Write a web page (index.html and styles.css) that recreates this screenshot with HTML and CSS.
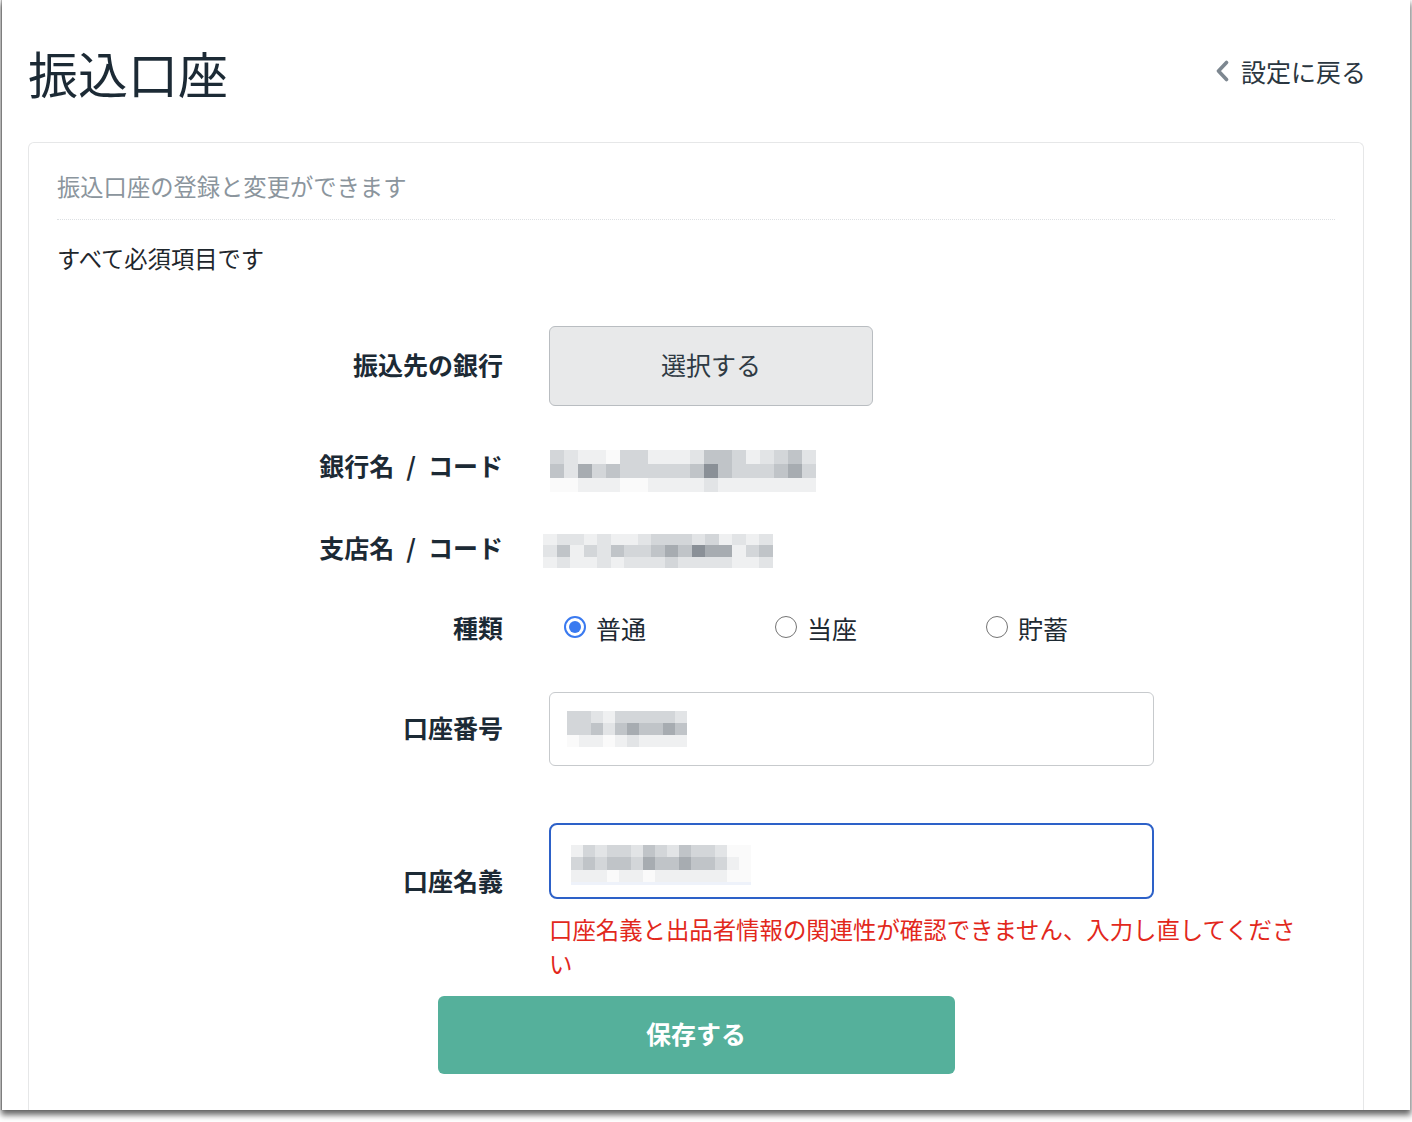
FILE: index.html
```html
<!DOCTYPE html>
<html lang="ja">
<head>
<meta charset="utf-8">
<title>振込口座</title>
<link rel="stylesheet" href="styles.css">
</head>
<body>
<div class="window">
  <header class="header">
    <h1 class="title">振込口座</h1>
    <a class="back" href="#">
      <svg class="chev" width="14" height="22" viewBox="0 0 14 22"><path d="M11.5 2.5 L3.5 11 L11.5 19.5" fill="none" stroke="#7d8790" stroke-width="3.6" stroke-linecap="round" stroke-linejoin="round"/></svg>
      <span>設定に戻る</span>
    </a>
  </header>
  <section class="card">
    <p class="lead">振込口座の登録と変更ができます</p>
    <p class="note">すべて必須項目です</p>
    <div class="form">
      <div class="row row-select">
        <div class="label">振込先の銀行</div>
        <button class="select-btn" type="button">選択する</button>
      </div>
      <div class="row row-bank">
        <div class="label">銀行名<span class="sep">/</span>コード</div>
        <div class="pix pix-bank">
          <i class="s3"></i><i class="s2"></i><i class="s1"></i><i class="s1"></i><i class="s0"></i><i class="s3"></i><i class="s3"></i><i class="s1"></i><i class="s1"></i><i class="s1"></i><i class="s2"></i><i class="s4"></i><i class="s4"></i><i class="s3"></i><i class="s1"></i><i class="s2"></i><i class="s3"></i><i class="s4"></i><i class="s2"></i>
          <i class="s4"></i><i class="s2"></i><i class="s5"></i><i class="s3"></i><i class="s4"></i><i class="s3"></i><i class="s3"></i><i class="s3"></i><i class="s3"></i><i class="s3"></i><i class="s4"></i><i class="s6"></i><i class="s4"></i><i class="s3"></i><i class="s3"></i><i class="s3"></i><i class="s4"></i><i class="s5"></i><i class="s3"></i>
          <i class="s0"></i><i class="s0"></i><i class="s1"></i><i class="s1"></i><i class="s1"></i><i class="s0"></i><i class="s0"></i><i class="s1"></i><i class="s1"></i><i class="s1"></i><i class="s1"></i><i class="s2"></i><i class="s1"></i><i class="s1"></i><i class="s1"></i><i class="s1"></i><i class="s1"></i><i class="s1"></i><i class="s1"></i>
        </div>
      </div>
      <div class="row row-branch">
        <div class="label">支店名<span class="sep">/</span>コード</div>
        <div class="pix pix-branch">
          <i class="s1"></i><i class="s2"></i><i class="s2"></i><i class="s1"></i><i class="s2"></i><i class="s1"></i><i class="s1"></i><i class="s2"></i><i class="s3"></i><i class="s3"></i><i class="s3"></i><i class="s2"></i><i class="s3"></i><i class="s1"></i><i class="s2"></i><i class="s1"></i><i class="s2"></i>
          <i class="s2"></i><i class="s4"></i><i class="s1"></i><i class="s3"></i><i class="s2"></i><i class="s4"></i><i class="s3"></i><i class="s3"></i><i class="s4"></i><i class="s5"></i><i class="s4"></i><i class="s6"></i><i class="s5"></i><i class="s5"></i><i class="s1"></i><i class="s3"></i><i class="s4"></i>
          <i class="s1"></i><i class="s2"></i><i class="s1"></i><i class="s1"></i><i class="s2"></i><i class="s1"></i><i class="s2"></i><i class="s2"></i><i class="s2"></i><i class="s3"></i><i class="s2"></i><i class="s2"></i><i class="s2"></i><i class="s2"></i><i class="s1"></i><i class="s1"></i><i class="s2"></i>
        </div>
      </div>
      <div class="row row-type">
        <div class="label">種類</div>
        <div class="radios">
          <label class="opt"><span class="radio checked"></span>普通</label>
          <label class="opt"><span class="radio"></span>当座</label>
          <label class="opt"><span class="radio"></span>貯蓄</label>
        </div>
      </div>
      <div class="row row-number">
        <div class="label">口座番号</div>
        <div class="input">
          <div class="pix pix-number">
            <i class="s3"></i><i class="s3"></i><i class="s2"></i><i class="s1"></i><i class="s3"></i><i class="s3"></i><i class="s3"></i><i class="s3"></i><i class="s3"></i><i class="s2"></i>
            <i class="s3"></i><i class="s3"></i><i class="s4"></i><i class="s2"></i><i class="s4"></i><i class="s5"></i><i class="s4"></i><i class="s4"></i><i class="s5"></i><i class="s4"></i>
            <i class="s0"></i><i class="s1"></i><i class="s1"></i><i class="s0"></i><i class="s1"></i><i class="s2"></i><i class="s1"></i><i class="s1"></i><i class="s1"></i><i class="s1"></i>
          </div>
        </div>
      </div>
      <div class="row row-name">
        <div class="label">口座名義</div>
        <div class="field">
          <div class="input input-focus">
            <div class="pix pix-name">
              <i class="s1"></i><i class="s3"></i><i class="s2"></i><i class="s3"></i><i class="s3"></i><i class="s2"></i><i class="s4"></i><i class="s3"></i><i class="s2"></i><i class="s4"></i><i class="s3"></i><i class="s3"></i><i class="s2"></i><i class="s0"></i><i class="s0"></i>
              <i class="s3"></i><i class="s4"></i><i class="s3"></i><i class="s4"></i><i class="s4"></i><i class="s3"></i><i class="s5"></i><i class="s4"></i><i class="s4"></i><i class="s5"></i><i class="s4"></i><i class="s4"></i><i class="s3"></i><i class="s1"></i><i class="s0"></i>
              <i class="s1"></i><i class="s1"></i><i class="s1"></i><i class="s0"></i><i class="s1"></i><i class="s1"></i><i class="s0"></i><i class="s1"></i><i class="s1"></i><i class="s1"></i><i class="s1"></i><i class="s1"></i><i class="s1"></i><i class="s0"></i><i class="s0"></i>
            </div>
          </div>
          <p class="error">口座名義と出品者情報の関連性が確認できません、入力し直してください</p>
        </div>
      </div>
      <button class="save-btn" type="button">保存する</button>
    </div>
  </section>
</div>
</body>
</html>
```

FILE: styles.css
```css
* { box-sizing: border-box; }

html, body {
  margin: 0;
  padding: 0;
  background: #ffffff;
}

body {
  font-family: "Noto Sans CJK JP", "Noto Sans", sans-serif;
  color: #1e2a33;
  width: 1412px;
  height: 1122px;
  overflow: hidden;
}

.window {
  width: 1408px;
  height: 1110px;
  margin-left: 2px;
  background: #ffffff;
  padding: 0 46px 0 26px;
  display: flex;
  flex-direction: column;
  overflow: hidden;
  box-shadow: -1px 0 1px rgba(0, 0, 0, 0.25), 0 4px 6px 1px rgba(0, 0, 0, 0.6);
}

.header {
  height: 142px;
  flex: 0 0 142px;
  display: flex;
  align-items: center;
  justify-content: space-between;
}

.title {
  margin: 0;
  font-size: 50px;
  line-height: 60px;
  font-weight: 400;
  color: #1c2a35;
  padding-top: 2px;
}

.back {
  display: flex;
  align-items: center;
  gap: 12px;
  margin-right: -2px;
  text-decoration: none;
  font-size: 25px;
  line-height: 36px;
  color: #2a3640;
}

.chev { display: block; }

.card {
  flex: 1;
  border: 1px solid #e6e7e8;
  border-bottom: none;
  border-radius: 6px 6px 0 0;
  padding: 0 28px;
}

.lead {
  margin: 0;
  padding: 26px 0 16px;
  font-size: 23.3px;
  line-height: 34px;
  color: #8b959d;
  border-bottom: 1px dotted #dde0e3;
}

.note {
  margin: 21px 0 0;
  font-size: 23.3px;
  line-height: 34px;
  color: #1f272d;
}

.form {
  margin-top: 51px;
  display: flex;
  flex-direction: column;
}

.row {
  display: flex;
  align-items: center;
}

.label {
  flex: 0 0 446px;
  margin-right: 46px;
  padding-bottom: 4px;
  text-align: right;
  font-size: 25px;
  line-height: 36px;
  font-weight: 700;
  color: #1c2a35;
}

.sep {
  display: inline-block;
  margin: 0 12px;
}

.row-select { height: 80px; }
.row-bank { margin-top: 40px; height: 42px; }
.row-branch { margin-top: 43px; height: 36px; }
.row-type { margin-top: 44px; height: 36px; }
.row-number { margin-top: 45px; height: 74px; }
.row-name { margin-top: 57px; align-items: flex-start; }
.row-name .label { padding-top: 39px; }

.select-btn {
  width: 324px;
  height: 80px;
  border: 1px solid #b9bdc1;
  border-radius: 6px;
  background: #e8e9ea;
  font-family: inherit;
  font-size: 25px;
  line-height: 36px;
  color: #2f3a43;
  padding: 0 0 5px;
}

.pix {
  display: grid;
}
.pix i { display: block; }

.pix-bank {
  grid-template-columns: repeat(19, 14px);
  grid-auto-rows: 14px;
  margin-left: 1px;
  margin-top: 8px;
}

.pix-branch {
  grid-template-columns: repeat(17, 13.5px);
  grid-auto-rows: 11.5px;
  margin-left: -6px;
  margin-top: 4px;
}

.pix-number {
  grid-template-columns: repeat(10, 12px);
  grid-auto-rows: 12px;
}

.pix-name {
  grid-template-columns: repeat(15, 12px);
  grid-auto-rows: 12.5px;
  margin-top: 8px;
  border-bottom: 3px solid #eef2fa;
}

.s0 { background: #fafafa; }
.s1 { background: #eff0f1; }
.s2 { background: #e2e4e6; }
.s3 { background: #d3d6d9; }
.s4 { background: #c0c4c8; }
.s5 { background: #a7acb1; }
.s6 { background: #8a9097; }

.radios {
  display: flex;
  padding-left: 15px;
}

.opt {
  width: 211px;
  display: flex;
  align-items: center;
  font-size: 25px;
  line-height: 36px;
  padding-bottom: 2px;
  color: #1e2a33;
}

.radio {
  width: 22px;
  height: 22px;
  border-radius: 50%;
  border: 1.6px solid #747474;
  margin-right: 10px;
  margin-top: -3px;
  position: relative;
  background: #fff;
}

.radio.checked {
  border: 2px solid #3a7af0;
}

.radio.checked::after {
  content: "";
  position: absolute;
  left: 3px;
  top: 3px;
  width: 12px;
  height: 12px;
  border-radius: 50%;
  background: #3a7af0;
}

.input {
  width: 605px;
  height: 74px;
  border: 1px solid #c7cacd;
  border-radius: 6px;
  display: flex;
  align-items: center;
  padding-left: 17px;
}

.field {
  display: flex;
  flex-direction: column;
}

.input-focus {
  height: 76px;
  border: 2px solid #2d61c8;
  border-radius: 8px;
  padding-left: 20px;
}

.error {
  margin: 13px 0 0;
  width: 765px;
  font-size: 23.4px;
  line-height: 34px;
  color: #e2281c;
}

.save-btn {
  margin: 16px auto 0;
  width: 517px;
  height: 78px;
  border: none;
  border-radius: 6px;
  background: #55b09b;
  color: #ffffff;
  font-family: inherit;
  font-size: 25px;
  line-height: 36px;
  font-weight: 700;
  padding: 0 0 5px;
}
```
